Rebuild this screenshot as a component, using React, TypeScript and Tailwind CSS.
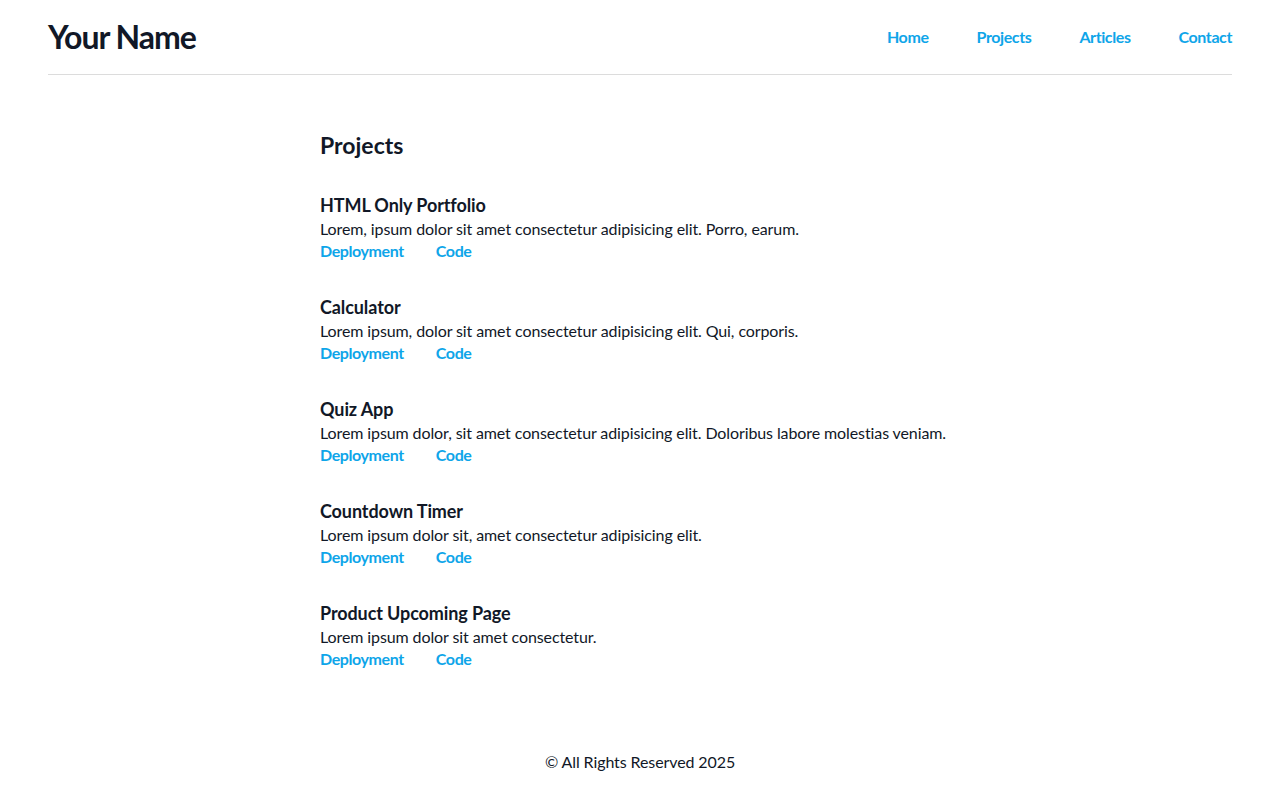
const projects = [
  {
    title: 'HTML Only Portfolio',
    text: 'Lorem, ipsum dolor sit amet consectetur adipisicing elit. Porro, earum.',
  },
  {
    title: 'Calculator',
    text: 'Lorem ipsum, dolor sit amet consectetur adipisicing elit. Qui, corporis.',
  },
  {
    title: 'Quiz App',
    text: 'Lorem ipsum dolor, sit amet consectetur adipisicing elit. Doloribus labore molestias veniam.',
  },
  {
    title: 'Countdown Timer',
    text: 'Lorem ipsum dolor sit, amet consectetur adipisicing elit.',
  },
  {
    title: 'Product Upcoming Page',
    text: 'Lorem ipsum dolor sit amet consectetur.',
  },
];

const navLinks = ['Home', 'Projects', 'Articles', 'Contact'];

export default function App() {
  return (
    <div className="min-h-screen bg-white text-[#111827] font-['Lato','Noto_Sans',sans-serif]">
      <header className="mx-12 flex items-center justify-between border-b border-[#dcdcdc] py-4">
        <h1 className="text-[32px] font-bold leading-[42px] tracking-[-1px]">Your Name</h1>
        <nav className="flex gap-12">
          {navLinks.map((link) => (
            <a
              key={link}
              href="#"
              className="text-base font-bold leading-6 tracking-[-0.4px] text-[#0ea5e9]"
            >
              {link}
            </a>
          ))}
        </nav>
      </header>

      <main className="mx-auto mt-[54px] max-w-[640px]">
        <h2 className="text-[23px] font-bold leading-8">Projects</h2>
        <ul className="mt-8 flex flex-col gap-[33px]">
          {projects.map((p) => (
            <li key={p.title}>
              <h3 className="text-lg font-bold leading-6 tracking-[-0.1px]">{p.title}</h3>
              <p className="mt-px text-base leading-[22px] tracking-[-0.1px]">{p.text}</p>
              <div className="flex gap-8 text-base font-bold leading-[22px] tracking-[-0.4px] text-[#0ea5e9]">
                <a href="#">Deployment</a>
                <a href="#">Code</a>
              </div>
            </li>
          ))}
        </ul>
      </main>

      <footer className="mt-20 pb-[26px] text-center text-base leading-6 tracking-[-0.1px]">
        © All Rights Reserved 2025
      </footer>
    </div>
  );
}
